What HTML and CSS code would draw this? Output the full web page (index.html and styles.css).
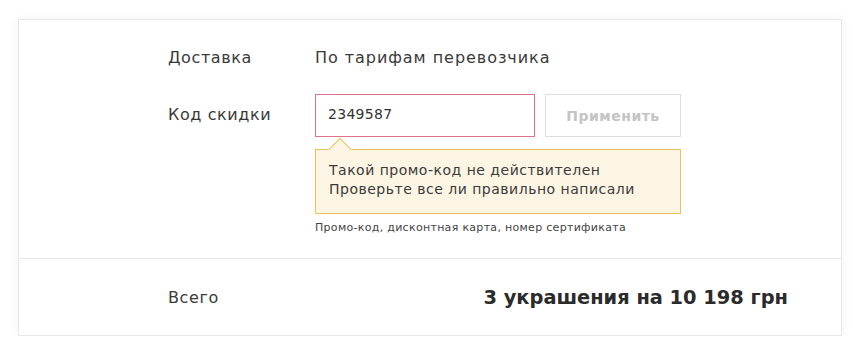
FILE: index.html
```html
<!DOCTYPE html>
<html lang="ru">
<head>
<meta charset="utf-8">
<link rel="stylesheet" href="styles.css">
</head>
<body>
<div class="card">
  <div class="top">
    <div class="row row-delivery">
      <div class="label">Доставка</div>
      <div class="value">По тарифам перевозчика</div>
    </div>
    <div class="row row-code">
      <div class="label label-code">Код скидки</div>
      <div class="field">
        <div class="controls">
          <div class="input">2349587</div>
          <div class="btn">Применить</div>
        </div>
        <div class="tip">
          <span class="arrow"></span>
          <div>Такой промо-код не действителен</div>
          <div>Проверьте все ли правильно написали</div>
        </div>
        <div class="hint">Промо-код, дисконтная карта, номер сертификата</div>
      </div>
    </div>
  </div>
  <div class="bottom">
    <div class="label">Всего</div>
    <div class="total">3 украшения на 10 198 грн</div>
  </div>
</div>
</body>
</html>
```
FILE: styles.css
```css
* { box-sizing: border-box; }
html, body { margin: 0; padding: 0; background: #fff; }
body {
  font-family: "DejaVu Sans", "Open Sans", sans-serif;
  color: #333;
  padding: 19px 0 0 18px;
}
.card {
  width: 824px;
  height: 317px;
  border: 1px solid #ebe7e9;
  box-shadow: 0 0 10px rgba(0,0,0,0.06);
  display: flex;
  flex-direction: column;
}
.top {
  height: 239px;
  border-bottom: 1px solid #ebe7e9;
  padding: 28px 0 0 149px;
}
.row { display: flex; }
.label {
  width: 147px;
  font-size: 16px;
  letter-spacing: 0.6px;
  color: #3a3a3a;
}
.value { font-size: 16px; letter-spacing: 0.95px; color: #3a3a3a; }
.row-code { margin-top: 27px; }
.label-code { padding-top: 11px; }
.controls { display: flex; gap: 10px; }
.input {
  width: 220px;
  height: 43px;
  border: 1px solid #e0718a;
  padding: 11px 12px;
  font-size: 14px;
  letter-spacing: 0.3px;
  color: #333;
}
.btn {
  width: 136px;
  height: 43px;
  border: 1px solid #dedede;
  color: #c4c4c4;
  font-size: 14px;
  font-weight: 600;
  letter-spacing: 0.5px;
  display: flex;
  align-items: center;
  justify-content: center;
}
.tip {
  position: relative;
  margin-top: 12px;
  width: 366px;
  height: 65px;
  background: #fdf5e4;
  border: 1px solid #e9c25c;
  padding: 11px 13px;
  font-size: 14px;
  letter-spacing: 0.5px;
  line-height: 19px;
  color: #3a3a3a;
}
.arrow {
  position: absolute;
  left: 16px;
  top: -9px;
  width: 16px;
  height: 16px;
  background: #fdf5e4;
  border-left: 1px solid #e9c25c;
  border-top: 1px solid #e9c25c;
  transform: rotate(45deg);
}
.hint {
  margin-top: 7px;
  font-size: 11px;
  letter-spacing: 0.3px;
  color: #444;
}
.bottom {
  flex: 1;
  display: flex;
  align-items: center;
  justify-content: space-between;
  padding: 0 53px 0 149px;
}
.total {
  font-size: 19.4px;
  font-weight: 600;
  color: #2b2b2b;
}
```
